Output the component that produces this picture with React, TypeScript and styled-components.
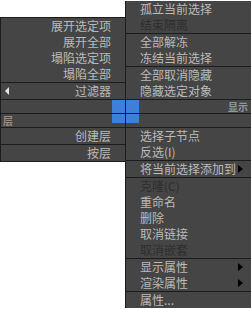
import { createGlobalStyle, styled } from "styled-components";
import { ReactElement } from "react";

const GlobalStyle = createGlobalStyle`
  html, body {
    margin: 0;
    padding: 0;
    background: #ffffff;
  }
  body {
    font-family: "Noto Sans CJK SC", "Liberation Sans", sans-serif;
  }
`;

const Quad = styled.div`
  display: grid;
  grid-template-columns: 125px 126px;
  grid-template-rows: 114px 195px;
  width: 251px;
  height: 309px;
  overflow: hidden;
`;

// quadrant menus hug the centre: top ones sit on the bottom of their cell
const Menu = styled.div<{ $side: "left" | "right"; $anchor: "top" | "bottom" }>`
  display: flex;
  flex-direction: column;
  background: #454545;
  border-left: 1px solid #1c1c1c;
  align-self: ${(p) => (p.$anchor === "bottom" ? "end" : "start")};
  ${(p) =>
    p.$side === "left" && p.$anchor === "bottom"
      ? "border-top: 1px solid #1c1c1c;"
      : ""}
  ${(p) =>
    p.$side === "left" && p.$anchor === "top"
      ? "border-bottom: 1px solid #1c1c1c;"
      : ""}
`;

const Item = styled.div<{ $side: "left" | "right"; $disabled?: boolean }>`
  display: flex;
  align-items: center;
  justify-content: ${(p) => (p.$side === "left" ? "flex-end" : "flex-start")};
  height: 16px;
  padding: ${(p) => (p.$side === "left" ? "0 14px 0 4px" : "0 8px 0 14px")};
  font-size: 12px;
  line-height: 16px;
  white-space: nowrap;
  color: ${(p) => (p.$disabled ? "#2e2e2e" : "#bababa")};
`;

const Label = styled.span`
  flex: 0 0 auto;
`;

const Rule = styled.div`
  height: 1px;
  background: #1c1c1c;
`;

const TitleBar = styled.div`
  display: flex;
  align-items: flex-start;
  height: 13px;
  border-bottom: 1px solid #1c1c1c;
`;

const Title = styled.span<{ $tint: string }>`
  font-size: 10px;
  font-weight: bold;
  line-height: 14px;
  padding: 0 3px 0 2px;
  color: ${(p) => p.$tint};
`;

const Spacer = styled.div`
  flex: 1;
`;

const Tile = styled.div<{ $short?: boolean }>`
  width: 13px;
  height: ${(p) => (p.$short ? "9px" : "13px")};
  background: #3d7fd9;
`;

const SubArrow = styled.i`
  margin-left: auto;
  width: 0;
  height: 0;
  border-left: 5px solid #000;
  border-top: 4px solid transparent;
  border-bottom: 4px solid transparent;
`;

const BackArrow = styled.i`
  margin-right: auto;
  width: 0;
  height: 0;
  border-right: 4px solid #e6e6e6;
  border-top: 4px solid transparent;
  border-bottom: 4px solid transparent;
`;

export default function App(): ReactElement {
  return (
    <>
      <GlobalStyle />
      <Quad>
        <Menu $side="left" $anchor="bottom">
          <Item $side="left"><Label>展开选定项</Label></Item>
          <Item $side="left"><Label>展开全部</Label></Item>
          <Item $side="left"><Label>塌陷选定项</Label></Item>
          <Item $side="left"><Label>塌陷全部</Label></Item>
          <Rule />
          <Item $side="left">
            <BackArrow />
            <Label>过滤器</Label>
          </Item>
          <Rule />
          <TitleBar>
            <Spacer />
            <Tile />
          </TitleBar>
        </Menu>

        <Menu $side="right" $anchor="bottom">
          <Item $side="right"><Label>孤立当前选择</Label></Item>
          <Item $side="right" $disabled><Label>结束隔离</Label></Item>
          <Rule />
          <Item $side="right"><Label>全部解冻</Label></Item>
          <Item $side="right"><Label>冻结当前选择</Label></Item>
          <Rule />
          <Item $side="right"><Label>全部取消隐藏</Label></Item>
          <Item $side="right"><Label>隐藏选定对象</Label></Item>
          <Rule />
          <TitleBar>
            <Tile />
            <Spacer />
            <Title $tint="#8c96a3">显示</Title>
          </TitleBar>
        </Menu>

        <Menu $side="left" $anchor="top">
          <TitleBar>
            <Title $tint="#9a8c7e">层</Title>
            <Spacer />
            <Tile $short />
          </TitleBar>
          <Item $side="left"><Label>创建层</Label></Item>
          <Rule />
          <Item $side="left"><Label>按层</Label></Item>
        </Menu>

        <Menu $side="right" $anchor="top">
          <TitleBar>
            <Tile $short />
          </TitleBar>
          <Item $side="right"><Label>选择子节点</Label></Item>
          <Item $side="right"><Label>反选(I)</Label></Item>
          <Rule />
          <Item $side="right">
            <Label>将当前选择添加到</Label>
            <SubArrow />
          </Item>
          <Rule />
          <Item $side="right" $disabled><Label>克隆(C)</Label></Item>
          <Item $side="right"><Label>重命名</Label></Item>
          <Item $side="right"><Label>删除</Label></Item>
          <Item $side="right"><Label>取消链接</Label></Item>
          <Item $side="right" $disabled><Label>取消嵌套</Label></Item>
          <Rule />
          <Item $side="right">
            <Label>显示属性</Label>
            <SubArrow />
          </Item>
          <Item $side="right">
            <Label>渲染属性</Label>
            <SubArrow />
          </Item>
          <Rule />
          <Item $side="right"><Label>属性...</Label></Item>
        </Menu>
      </Quad>
    </>
  );
}
